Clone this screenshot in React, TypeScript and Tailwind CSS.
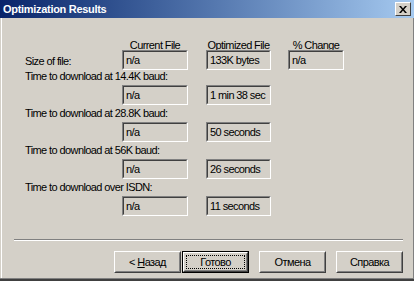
import React from "react";

function Box({ w, text }: { w: string; text: string }) {
  return (
    <div className={`${w} h-[20px] border border-t-[#808080] border-l-[#808080] border-b-white border-r-white`}>
      <div className="h-full w-full border border-t-[#404040] border-l-[#404040] border-b-[#d4d0c8] border-r-[#d4d0c8] pl-[2px] leading-[16px] whitespace-nowrap overflow-hidden">
        {text}
      </div>
    </div>
  );
}

function Btn({ children, def }: { children: React.ReactNode; def?: boolean }) {
  if (def) {
    return (
      <div className="w-[67px] h-[22px] border border-black">
        <div className="h-full w-full border border-t-white border-l-white border-b-[#404040] border-r-[#404040]">
          <div className="h-full w-full border border-t-[#d4d0c8] border-l-[#d4d0c8] border-b-[#808080] border-r-[#808080] p-[1px]">
            <div className="h-full w-full border border-dotted border-black flex items-center justify-center leading-none">
              {children}
            </div>
          </div>
        </div>
      </div>
    );
  }
  return (
    <div className="w-[67px] h-[22px] border border-t-white border-l-white border-b-[#404040] border-r-[#404040]">
      <div className="h-full w-full border border-t-[#d4d0c8] border-l-[#d4d0c8] border-b-[#808080] border-r-[#808080] flex items-center justify-center leading-none">
        {children}
      </div>
    </div>
  );
}

function Group({ label, a, b }: { label: string; a: string; b: string }) {
  return (
    <div className="flex flex-col">
      <div className="pl-[24px] h-[13px] leading-[13px] whitespace-nowrap">{label}</div>
      <div className="flex mt-[2px] pb-[2px]">
        <div className="w-[121px]" />
        <Box w="w-[66px]" text={a} />
        <div className="w-[18px]" />
        <Box w="w-[65px]" text={b} />
      </div>
    </div>
  );
}

export default function App() {
  return (
    <div className="w-[414px] h-[281px] overflow-hidden bg-[#d4d0c8] text-black text-[11px] tracking-[-0.6px] [font-family:'Liberation_Sans',Arial,sans-serif] flex flex-col">
      <div className="h-[18px] shrink-0 bg-gradient-to-r from-[#0a246a] to-[#a6caf0] flex items-center justify-between pl-[3px] pr-[3px]">
        <span className="text-white font-bold text-[11px] leading-none tracking-[-0.3px]">Optimization Results</span>
        <div className="w-[16px] h-[14px] bg-[#d4d0c8] border border-t-white border-l-white border-b-[#404040] border-r-[#404040] flex items-center justify-center">
          <svg width="8" height="7" viewBox="0 0 8 7">
            <path d="M0 0h2l2 2.5L6 0h2L5 3.5 8 7H6L4 4.5 2 7H0l3-3.5z" fill="black" />
          </svg>
        </div>
      </div>
      <div className="flex-1 flex flex-col border-l border-l-white border-r border-r-[#808080] ml-[1px]">
        <div className="h-[22px]" />
        <div className="flex h-[10px] leading-[11px] whitespace-nowrap">
          <div className="w-[120px]" />
          <div className="w-[66px] text-center">Current File</div>
          <div className="w-[18px]" />
          <div className="w-[65px] text-center">Optimized File</div>
          <div className="w-[17px]" />
          <div className="w-[56px] text-center">% Change</div>
        </div>
        <div className="flex h-[20px] items-center">
          <div className="w-[120px] pl-[23px] leading-[13px] pt-[2px]">Size of file:</div>
          <Box w="w-[66px]" text="n/a" />
          <div className="w-[18px]" />
          <Box w="w-[65px]" text="133K bytes" />
          <div className="w-[17px]" />
          <Box w="w-[56px]" text="n/a" />
        </div>
        <div className="ml-[-1px] flex flex-col">
          <Group label="Time to download at 14.4K baud:" a="n/a" b="1 min 38 sec" />
          <Group label="Time to download at 28.8K baud:" a="n/a" b="50 seconds" />
          <Group label="Time to download at 56K baud:" a="n/a" b="26 seconds" />
          <Group label="Time to download over ISDN:" a="n/a" b="11 seconds" />
        </div>
        <div className="mt-[21px] ml-[12px] w-[389px] h-[2px] border-t border-t-[#808080] border-b border-b-white" />
        <div className="flex mt-[10px] pl-[112px]">
          <Btn>
            <span>&lt; <span className="underline">Н</span>азад</span>
          </Btn>
          <div className="w-[1px]" />
          <Btn def>Готово</Btn>
          <div className="w-[10px]" />
          <Btn>Отмена</Btn>
          <div className="w-[10px]" />
          <Btn>Справка</Btn>
        </div>
        <div className="flex-1" />
      </div>
      <div className="h-[1px] bg-[#808080]" />
      <div className="h-[2px] bg-[#404040]" />
    </div>
  );
}
